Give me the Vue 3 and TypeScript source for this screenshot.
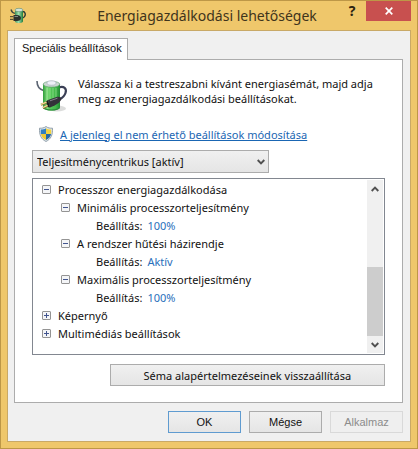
<script setup lang="ts">
import { ref } from 'vue'

interface Row {
  label: string
  level: number
  value?: string
  expanded?: boolean
}

const plan = ref('performance')

const rows: Row[] = [
  { label: 'Processzor energiagazdálkodása', level: 1, expanded: true },
  { label: 'Minimális processzorteljesítmény', level: 2, expanded: true },
  { label: 'Beállítás:', level: 3, value: '100%' },
  { label: 'A rendszer hűtési házirendje', level: 2, expanded: true },
  { label: 'Beállítás:', level: 3, value: 'Aktív' },
  { label: 'Maximális processzorteljesítmény', level: 2, expanded: true },
  { label: 'Beállítás:', level: 3, value: '100%' },
  { label: 'Képernyő', level: 1, expanded: false },
  { label: 'Multimédiás beállítások', level: 1, expanded: false },
]
</script>

<template>
  <div class="window">
    <header class="titlebar">
      <svg class="app-icon" viewBox="0 0 16 17">
        <defs>
          <linearGradient id="green-small" x1="0" x2="1" y1="0" y2="0">
            <stop offset="0" stop-color="#3f8f58" />
            <stop offset="0.45" stop-color="#9fe0ae" />
            <stop offset="1" stop-color="#1f7a3a" />
          </linearGradient>
        </defs>
        <path d="M1 2.500C1.500 4.500 3 6 5 6.300" fill="none" stroke="#3f4a3f" stroke-width="1.300" />
        <path d="M12 4.500C15.500 4 15.800 8 14.500 9.500C13.800 10.800 12 11.500 9 11.500" fill="none" stroke="#2c3a34" stroke-width="1.400" />
        <path d="M5 3V14.500C6 16.500 12 16.500 13 14.500V3Z" fill="url(#green-small)" />
        <ellipse cx="9" cy="3" rx="4" ry="1.700" fill="#d3e3d8" stroke="#5f8a70" stroke-width="0.600" />
        <path d="M3.500 8H7C9.500 8 11 9.500 11 11C11 12.800 9.500 14 7 14H3.500Z" fill="#2b312e" />
        <path d="M0 9.700H3.500M0 12.300H3.500" stroke="#5c5434" stroke-width="1.300" />
        <path d="M4.500 9.500H8" stroke="#8a948e" stroke-width="0.900" />
      </svg>
      <h1 class="title">Energiagazdálkodási lehetőségek</h1>
      <button class="help" type="button">?</button>
      <button class="close" type="button">
        <svg viewBox="0 0 8 8" width="8" height="8">
          <path d="M0.700 0.700 7.300 7.300M7.300 0.700 0.700 7.300" fill="none" stroke="#fff" stroke-width="1.700" />
        </svg>
      </button>
    </header>

    <main class="client">
      <nav class="tabs">
        <button class="tab" type="button">Speciális beállítások</button>
      </nav>

      <section class="page">
        <div class="intro">
          <svg class="plan-icon" viewBox="0 0 32 34">
            <defs>
              <linearGradient id="green" x1="0" x2="1" y1="0" y2="0">
                <stop offset="0" stop-color="#2f9d3a" />
                <stop offset="0.25" stop-color="#7fdc7c" />
                <stop offset="0.4" stop-color="#58c95a" />
                <stop offset="0.75" stop-color="#43b84b" />
                <stop offset="1" stop-color="#1f8a33" />
              </linearGradient>
            </defs>
            <ellipse cx="21" cy="28.500" rx="9" ry="3" fill="#8a8f8a" opacity="0.3" />
            <path d="M1 1C1 5 2.500 9 7.500 10.500" fill="none" stroke="#5b6472" stroke-width="1.600" />
            <path d="M22.500 7.500C28 5.500 31 8.500 29.500 13C28.500 16.500 26 18 23 20" fill="none" stroke="#3b4056" stroke-width="2.200" />
            <path d="M7 4V27.500C8 31.500 22.500 31.500 24 27.500V4Z" fill="url(#green)" />
            <path d="M7.500 27.500C9 30.800 22 30.800 23.500 27.500" fill="none" stroke="#2b8a3b" stroke-width="1.200" />
            <path d="M11 8V21M14 8V19M17 8V18M20 8V17" stroke="#b4efb0" stroke-width="1" opacity="0.5" />
            <ellipse cx="15.500" cy="4.200" rx="8.300" ry="2.900" fill="#cbd8d0" stroke="#6aa47a" stroke-width="0.700" />
            <ellipse cx="15.500" cy="3" rx="4.600" ry="2.200" fill="#edf0f6" stroke="#a2a9bb" stroke-width="0.600" />
            <path d="M12 20 20 17.200C23 16.200 25.500 17 25.300 19C25 21 22.500 23.500 19 25.300L14 27.500Z" fill="#34323a" />
            <path d="M14 20.800 21.500 18.200" stroke="#85838c" stroke-width="1" />
            <path d="M12 20 14 27.500 11.500 27 10 21.500Z" fill="#1b1a1f" />
            <path d="M10.500 22.500 5 24.800M11.500 25.800 7 27.900" stroke="#8a6f2f" stroke-width="2.200" />
            <path d="M10.500 22.100 5 24.400M11.500 25.400 7 27.500" stroke="#f2df98" stroke-width="1.200" />
          </svg>
          <p>Válassza ki a testreszabni kívánt energiasémát, majd adja meg az energiagazdálkodási beállításokat.</p>
        </div>

        <div class="elevate">
          <svg class="shield" viewBox="0 0 14 16">
            <path d="M7 0.500C9 2 11 2.300 13.500 2.200C13.800 9 12 13 7 15.500C2 13 0.200 9 0.500 2.200C3 2.300 5 2 7 0.500Z" fill="#dce5ea" stroke="#8a98a4" stroke-width="0.900" />
            <path d="M7 2.200V8H1.900C1.700 6.500 1.700 5 1.800 3.500C4 3.500 5.500 3.200 7 2.200Z" fill="#317fc0" />
            <path d="M7 2.200C8.500 3.200 10 3.500 12.200 3.500C12.300 5 12.300 6.500 12.100 8H7Z" fill="#f2d341" />
            <path d="M1.900 8H7V14C4 12.500 2.400 10.500 1.900 8Z" fill="#f0ca33" />
            <path d="M7 8H12.100C11.600 10.500 10 12.500 7 14Z" fill="#2669a6" />
          </svg>
          <a href="#">A jelenleg el nem érhető beállítások módosítása</a>
        </div>

        <div class="combo">
          <select v-model="plan" aria-label="Energiaséma">
            <option value="performance">Teljesítménycentrikus [aktív]</option>
          </select>
          <svg class="combo-arrow" viewBox="0 0 8 6">
            <path d="M0.700 1 4 4.300 7.300 1" fill="none" stroke="#505050" stroke-width="1.900" />
          </svg>
        </div>

        <div class="tree-box">
          <ul class="tree">
            <li v-for="(row, i) in rows" :key="i" :class="['row', 'level-' + row.level]">
              <button v-if="row.expanded !== undefined" class="toggle" type="button" :aria-expanded="row.expanded">
                <svg viewBox="0 0 9 9" width="9" height="9">
                  <rect x="0.500" y="0.500" width="8" height="8" rx="0.500" fill="#f4f5f7" stroke="#949494" />
                  <path :d="row.expanded ? 'M2 4.5H7' : 'M2 4.5H7M4.5 2V7'" stroke="#42558f" />
                </svg>
              </button>
              <span>{{ row.label }}</span>
              <a v-if="row.value" class="value" href="#">{{ row.value }}</a>
            </li>
          </ul>
          <div class="scrollbar">
            <button class="scroll-button" type="button">
              <svg viewBox="0 0 8 6" width="8" height="6">
                <path d="M0.700 5 4 1.700 7.300 5" fill="none" stroke="#505050" stroke-width="1.900" />
              </svg>
            </button>
            <div class="track"><div class="thumb"></div></div>
            <button class="scroll-button" type="button">
              <svg viewBox="0 0 8 6" width="8" height="6">
                <path d="M0.700 1 4 4.300 7.300 1" fill="none" stroke="#505050" stroke-width="1.900" />
              </svg>
            </button>
          </div>
        </div>

        <button class="btn restore" type="button">Séma alapértelmezéseinek visszaállítása</button>
      </section>

      <footer class="actions">
        <button class="btn default" type="button">OK</button>
        <button class="btn" type="button">Mégse</button>
        <button class="btn" type="button" disabled>Alkalmaz</button>
      </footer>
    </main>
  </div>
</template>

<style>
body {
  margin: 0;
}
</style>

<style scoped>
* {
  box-sizing: border-box;
}

button,
select {
  margin: 0;
  padding: 0;
  font: inherit;
  color: inherit;
  border: 0;
  border-radius: 0;
  background: none;
}

svg {
  display: block;
}

.window {
  display: flex;
  flex-direction: column;
  min-height: 100vh;
  padding: 0 6px 6px;
  border: 1px solid #bd9747;
  background: #efc76b;
  color: #111;
  font-family: "Noto Sans", "Open Sans", sans-serif;
  font-size: 11px;
  line-height: 15px;
}

.titlebar {
  display: flex;
  align-items: flex-start;
  height: 29px;
}

.app-icon {
  width: 16px;
  height: 17px;
  margin: 6px 0 0 3px;
}

.title {
  flex: 1;
  margin: 0 0 0 50px;
  text-align: center;
  font-size: 14px;
  font-weight: 400;
  line-height: 29px;
  white-space: nowrap;
  color: #3f341c;
}

.help {
  width: 28px;
  font-size: 14px;
  font-weight: 700;
  line-height: 20px;
  color: #2b2210;
}

.close {
  display: flex;
  align-items: center;
  justify-content: center;
  width: 45px;
  height: 20px;
  background: #c8504f;
}

.client {
  display: flex;
  flex: 1;
  flex-direction: column;
  padding: 7px 7px 8px 6px;
  border: 1px solid #c9a966;
  background: #f0f0f0;
}

.tabs {
  display: flex;
}

.tab {
  position: relative;
  height: 22px;
  margin-bottom: -1px;
  padding: 0 5px 2px 7px;
  border: 1px solid #acacac;
  border-bottom: 0;
  background: #fff;
  font-family: "Liberation Sans", sans-serif;
}

.page {
  display: flex;
  flex: 1;
  flex-direction: column;
  padding: 16px 17px 16px 17px;
  border: 1px solid #acacac;
  background: #fff;
}

.intro {
  display: flex;
  height: 42px;
}

.plan-icon {
  width: 32px;
  height: 34px;
  margin: 4px 10px 0 4px;
}

.intro p {
  flex: 1;
  margin: 0;
}

.elevate {
  display: flex;
  align-items: center;
  gap: 7px;
  height: 32px;
  padding-left: 7px;
}

.shield {
  width: 14px;
  height: 16px;
}

.elevate a {
  color: #1a66b3;
}

.combo {
  display: grid;
  align-items: center;
  width: 67%;
  height: 23px;
}

.combo select {
  grid-area: 1 / 1;
  width: 100%;
  height: 23px;
  padding: 0 20px 0 4px;
  appearance: none;
  border: 1px solid #acacac;
  background: linear-gradient(#f0f0f0, #e5e5e5);
}

.combo-arrow {
  grid-area: 1 / 1;
  justify-self: end;
  width: 8px;
  height: 6px;
  margin-right: 4px;
  pointer-events: none;
}

.tree-box {
  display: flex;
  flex: 1;
  margin-top: 5px;
  padding: 1px;
  border: 1px solid #828790;
}

.tree {
  flex: 1;
  margin: 0;
  padding: 0;
  list-style: none;
}

.row {
  display: flex;
  align-items: center;
  gap: 7px;
  height: 18px;
}

.level-1 {
  padding-left: 8px;
}

.level-2 {
  padding-left: 27px;
}

.level-3 {
  gap: 5px;
  padding-left: 62px;
}

.value {
  color: #2a6fbb;
  text-decoration: none;
}

.scrollbar {
  display: flex;
  flex-direction: column;
  width: 16px;
  background: #f0f0f0;
}

.scroll-button {
  display: flex;
  align-items: center;
  justify-content: center;
  height: 17px;
}

.track {
  display: flex;
  flex: 1;
  align-items: flex-end;
}

.thumb {
  width: 100%;
  height: 50%;
  background: #cdcdcd;
}

.btn {
  height: 22px;
  border: 1px solid #acacac;
  background: linear-gradient(#f0f0f0, #e5e5e5);
}

.restore {
  align-self: flex-end;
  width: 78%;
  margin-top: 9px;
}

.actions {
  display: flex;
  justify-content: flex-end;
  gap: 8px;
  margin-top: 8px;
  font-family: "Liberation Sans", sans-serif;
}

.actions .btn {
  width: 73px;
}

.btn.default {
  border-color: #5f9bd0;
}

.btn:disabled {
  border-color: #d9d9d9;
  background: #efefef;
  color: #8c8c8c;
}
</style>
